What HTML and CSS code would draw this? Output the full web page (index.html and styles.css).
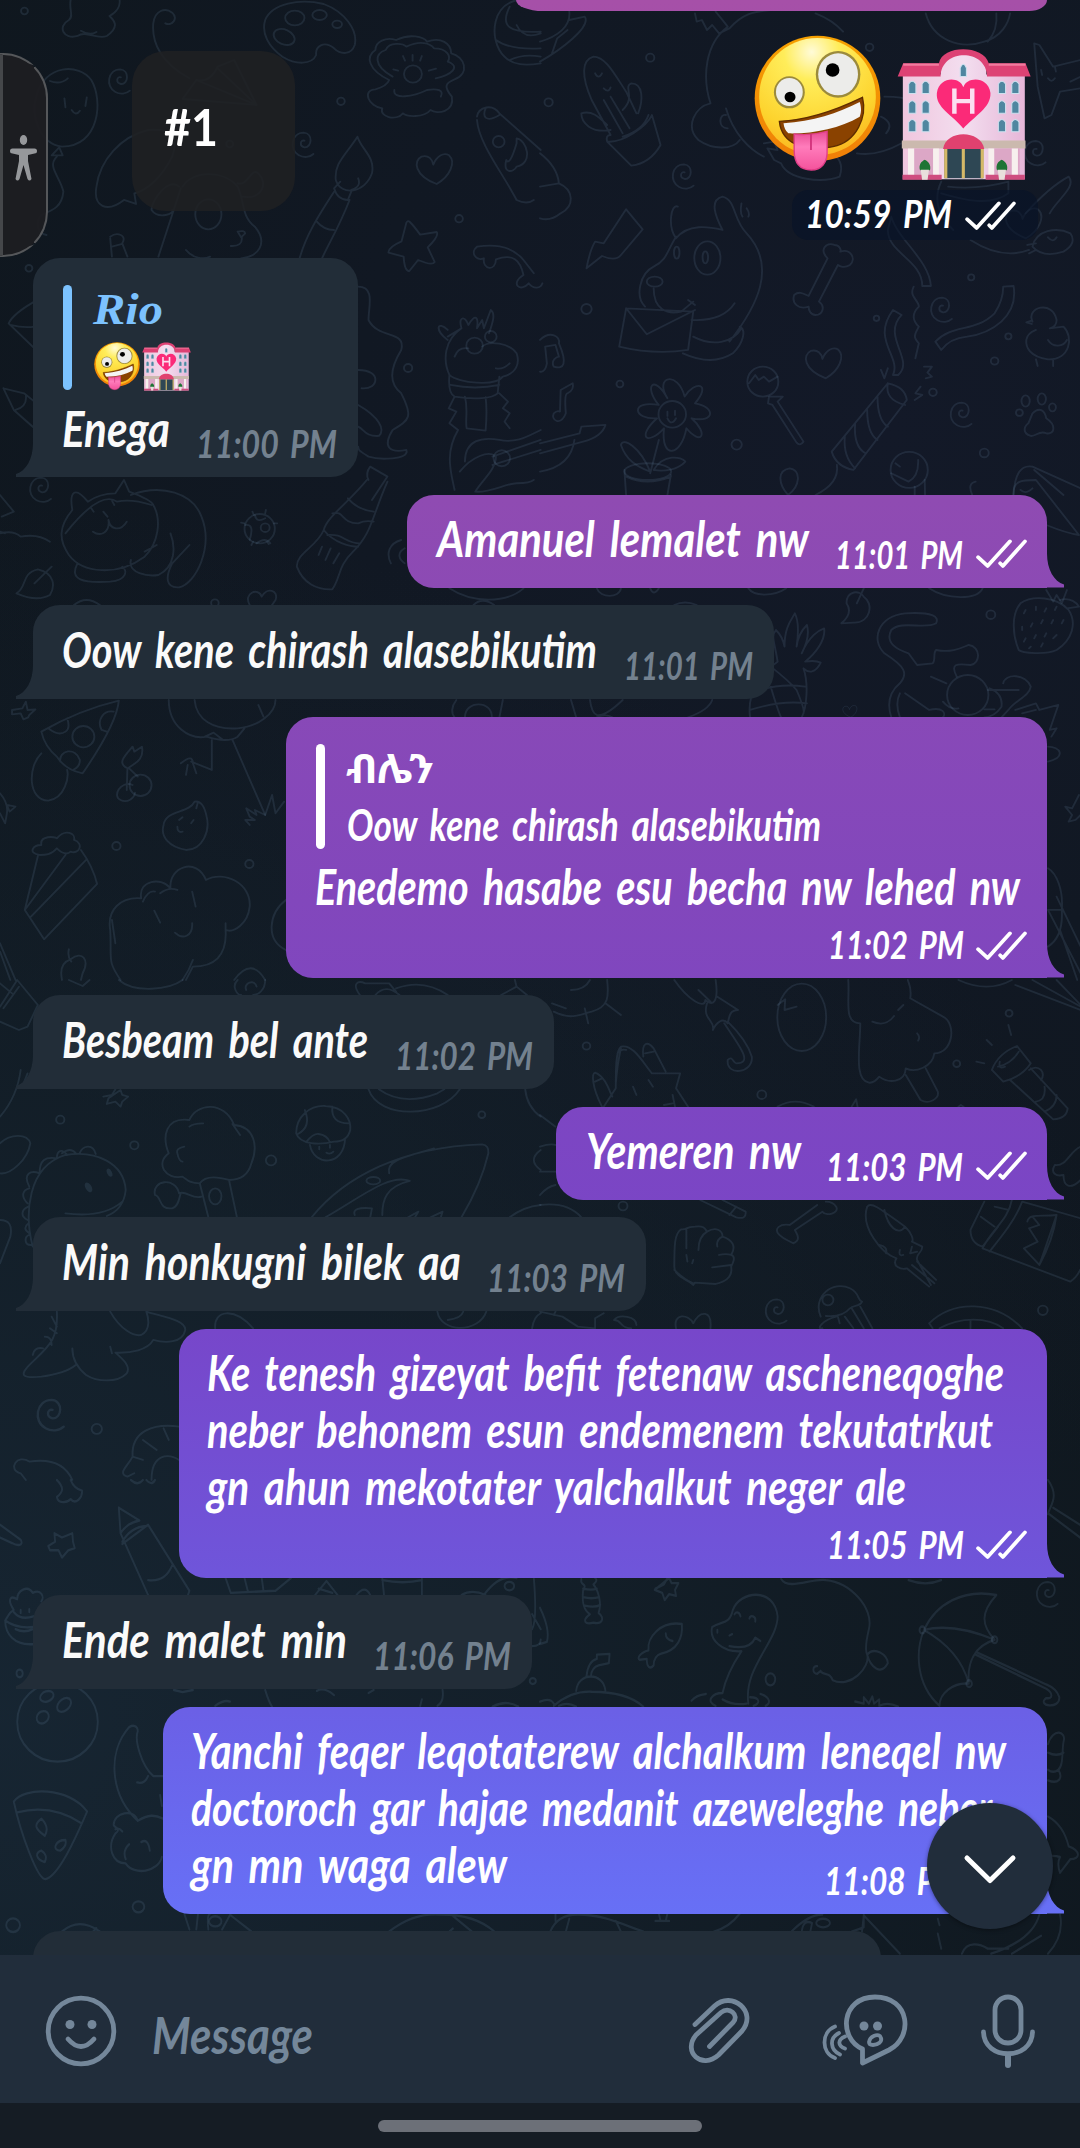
FILE: index.html
```html
<!DOCTYPE html>
<html lang="am">
<head>
<meta charset="utf-8">
<title>Chat</title>
<link rel="stylesheet" href="styles.css">
</head>
<body>
<main class="chat">
  <svg class="wallpaper" width="1080" height="1955" viewBox="0 0 1080 1955" aria-hidden="true">
    <defs>
      <path id="spiral" d="M2-8C-10-12-14 8 2 12C24 14 28-30 0-32C-36-32-44 20-14 36C0 44 18 42 28 32"/>
      <path id="star" d="M-10-72Q2-60 20-34L68-42Q76-30 42 4L62 48Q56 60 14 42L-12 76Q-26 74-28 32L-72 20Q-74 4-34-14L-20-70Q-16-78-10-72Z"/>
      <path id="heart" d="M6 50C-60 24-62-20-38-32C-18-38-6-24-4-8C6-34 26-46 42-36C62-16 46 26 6 50Z"/>
      <path id="bone" d="M4 22L44-60C20-75 15-35 0-50C-5-85 25-100 45-80C70-75 80-50 60-38C45-30 35-38 30-42L-10 55C5 65 0 120-25 125C-45 125-48 110-48 105C-75 115-105 95-100 75C-95 50-65 55-50 65Z"/>
    </defs>
    <g transform="scale(.3444 .3333)">
      <path d="M205 0C200 30 215 50 200 60C165 80 185 120 225 108C250 90 280 120 310 108C350 80 330 60 318 48C350 30 350 5 345-10M235 92Q260 108 280 96M480 70C500 80 518 55 500 38C480 22 450 30 445 70C440 130 470 190 550 235"/>
      <path d="M770 60C790 10 870-5 940 12C1000 35 1040 90 1030 135C1020 165 990 165 970 145C940 120 915 140 918 165C905 195 860 195 820 170C780 140 758 100 770 60Z"/>
      <ellipse cx="856" cy="54" rx="28" ry="22"/><ellipse cx="928" cy="45" rx="21" ry="15"/><ellipse cx="979" cy="73" rx="14" ry="11"/><ellipse cx="825" cy="111" rx="32" ry="22" transform="rotate(25 825 111)"/>
      <path d="M1130 240C1070 210 1060 170 1090 150C1090 125 1120 110 1150 120C1190 100 1230 110 1240 125C1280 110 1310 130 1310 160C1350 170 1365 220 1320 238C1290 250 1290 262 1312 290C1320 335 1270 345 1250 330C1230 355 1180 350 1170 340C1150 365 1100 350 1110 325C1070 320 1050 270 1090 268C1110 262 1125 255 1130 240ZM1140 230C1080 195 1090 160 1120 150C1130 125 1170 130 1180 140C1220 120 1250 130 1260 145C1300 145 1310 170 1300 185C1340 200 1310 225 1265 235M1145 270C1140 300 1200 290 1240 270C1270 265 1290 270 1280 290M1198 165V182M1225 168L1220 182M1170 168L1176 182M1245 212L1266 206M1142 208L1156 212"/>
      <circle cx="1199" cy="222" r="26"/><circle cx="71" cy="33" r="10"/><circle cx="990" cy="304" r="11"/><circle cx="1333" cy="656" r="11"/><circle cx="1185" cy="1104" r="12"/><circle cx="84" cy="805" r="10"/><circle cx="667" cy="432" r="10"/>
      <path d="M1500 0C1430 20 1425 100 1450 150C1480 205 1540 195 1570 190M1480 20C1450 80 1480 100 1570 95M1500 75Q1520 120 1570 100M1440 120Q1480 150 1570 145M1480 180Q1520 160 1570 170"/>
      <path d="M180 440C110 430 90 340 105 290C130 190 230 190 265 240C300 300 290 440 180 440ZM145 243Q175 255 197 235M187 295L190 322M252 292L248 318M208 330Q220 350 232 332M172 442L150 466H182ZM165 470C135 500 175 530 184 575C180 620 155 630 120 645C100 670 110 700 135 705"/>
      <path d="M530 297L570 240Q610 250 632 200L680 180L745 315ZM570 240L745 315L632 205M280 560C290 480 350 410 430 390C500 385 520 410 500 470C470 530 430 570 390 580L395 612L360 600C310 640 270 620 280 560ZM530 560C560 510 650 510 690 560C710 600 700 650 740 680C780 730 750 770 700 775M525 565L460 770M520 560C490 530 440 600 440 630C460 660 510 640 500 630M690 550C720 560 730 500 750 520C780 550 760 600 705 590M540 750C560 775 590 780 610 770M690 695Q710 690 712 700L700 712ZM702 712Q705 740 670 738"/>
      <ellipse cx="605" cy="643" rx="38" ry="45"/>
      <path d="M1038 410C1000 470 970 490 975 540C990 590 1060 580 1080 520C1090 470 1050 450 1038 410ZM988 545L970 565Q980 600 1010 600L1020 575M970 575C930 640 890 700 870 775M1015 600C985 680 960 720 935 775M920 665Q940 690 970 690M1040 535Q1050 560 1020 570"/>
      <path d="M1385 350C1390 320 1430 310 1450 340L1570 450M1385 360C1390 430 1460 520 1500 600Q1530 615 1550 600M1410 325C1400 350 1410 370 1450 345M1500 430Q1480 500 1470 480C1460 520 1490 520 1500 500C1550 490 1530 420 1500 415Z"/><circle cx="1448" cy="425" r="17"/>
      <path d="M1385 740C1420 735 1480 730 1520 780L1550 820M1385 740C1365 755 1380 785 1405 775C1400 810 1440 815 1440 778C1490 760 1510 780 1520 825C1480 850 1510 880 1535 850C1550 870 1570 865 1575 850"/>
      <path d="M1040 860C1090 860 1070 920 1070 960C1100 1020 1180 990 1165 1050C1130 1110 1130 1150 1165 1180C1200 1250 1190 1260 1140 1290C1110 1340 1130 1360 1180 1350C1190 1380 1100 1380 1070 1370C1040 1350 1040 1350 1040 1340M1040 1110C1110 1110 1100 1170 1050 1165M1040 1215C1100 1250 1120 1290 1100 1308C1060 1310 1060 1290 1040 1280M1075 1400L1125 1430L1080 1500M1075 1400Q1060 1420 1070 1440"/>
      <path d="M1300 1010L1340 985C1330 950 1350 945 1360 975C1380 940 1390 950 1385 985L1400 960L1405 985L1425 930C1440 940 1430 970 1420 1000M1340 985C1290 1020 1285 1080 1305 1125C1330 1150 1440 1160 1460 1130C1500 1120 1510 1090 1500 1060C1480 1030 1420 1020 1400 1040M1300 1020C1260 990 1270 960 1300 990M1320 1070Q1330 1040 1360 1045M1440 1105Q1460 1110 1480 1090M1305 1125Q1300 1180 1320 1190C1380 1200 1430 1195 1445 1180L1450 1130M1308 1155Q1380 1170 1450 1155M1350 1190C1360 1230 1350 1260 1355 1285L1410 1292Q1415 1230 1410 1192M1320 1190L1303 1225L1325 1235L1305 1270L1330 1290C1290 1360 1310 1420 1320 1470M1450 1180L1475 1205L1460 1225L1480 1240L1465 1265L1480 1285M1350 1385C1350 1320 1400 1310 1450 1320C1500 1330 1530 1310 1570 1290M1335 1415C1370 1370 1420 1350 1440 1370C1440 1410 1400 1440 1380 1475C1420 1480 1470 1450 1500 1450Q1540 1450 1550 1440M1430 1370L1570 1320M1430 1395L1570 1350"/>
      <circle cx="1378" cy="1037" r="24"/><circle cx="1425" cy="1010" r="17"/><circle cx="1457" cy="1375" r="24"/>
      <path d="M100 905Q40 940 25 970L100 1045M30 975Q70 985 100 980M10 1165L40 1230L100 1285M10 1165L70 1180L100 1205M45 1230Q80 1220 75 1185M320 710C340 695 370 705 355 730L370 770M320 715L325 770M325 740L355 732"/>
      <use href="#spiral" x="349" y="240"/><use href="#spiral" x="882" y="430"/><use href="#spiral" x="120" y="1465"/>
      <use href="#heart" x="1262" y="502"/><use href="#star" x="1200" y="738"/>
    </g>
    <g transform="translate(540) scale(.3444 .3333)">
      <path d="M85 35C90 80 50 110 0 125M85 60L130 50C150 80 60 150 0 185M35 160L50 115L80 90M450 40L455 65L470 60L485 90L500 75L520 100L550 85C590 40 620 35 670 30M510 35Q530 60 545 80C480 130 470 230 495 310C450 320 420 380 460 420C500 450 560 450 580 420M540 325C560 400 610 450 650 470M800 40Q850 60 880 95M1000 290C1080 290 1100 310 1060 320M540 345C520 340 515 385 545 385M650 430L680 425L690 450L660 445L680 480L700 490C720 540 820 550 870 530C880 500 870 480 860 470M920 460Q980 470 1050 430M990 350Q1030 370 1005 400"/>
      <path d="M1120 40C1140 120 1220 150 1290 125C1340 110 1360 70 1365 40M1325 40Q1330 90 1300 125"/>
      <path d="M205 405L150 300C120 230 120 180 155 170C190 170 215 220 250 275L280 340M160 220Q170 240 180 220M185 265Q200 280 205 262M240 330C280 290 240 260 265 250C300 250 300 300 285 340M205 390C150 400 120 370 120 340C150 330 170 350 195 375M185 300L240 400M205 290L260 385M195 425C240 430 310 380 325 345L350 435Q320 490 265 497ZM195 425Q190 405 205 405M240 410Q300 390 315 345"/>
      <path d="M0 460Q50 500 55 550C100 570 100 620 60 640Q30 665 0 655M55 550L0 560"/>
      <path d="M250 628L298 688L235 765Q220 785 180 768L135 805Q145 750 160 725L185 730ZM400 620C380 610 370 680 395 715C430 670 490 680 530 690C510 650 490 600 530 590C570 600 560 660 600 700C690 800 630 920 550 1025M395 710C370 750 370 780 330 800C290 820 275 890 305 920M330 865C330 930 370 945 410 935L445 905M440 960Q530 965 565 910M430 900L450 915M585 610Q580 640 588 650M600 625Q610 640 605 650M250 925L445 935L430 1050Q330 1065 230 1040ZM250 925L310 1003L450 930M415 1060Q500 1100 560 1060C590 1030 600 990 580 980M445 1010C500 1040 560 1030 585 985"/>
      <ellipse cx="397" cy="758" rx="8" ry="18"/><ellipse cx="486" cy="774" rx="38" ry="50"/><ellipse cx="480" cy="772" rx="8" ry="18"/><ellipse cx="333" cy="845" rx="23" ry="15"/>
      <path d="M835 775C810 750 830 725 855 735C870 735 875 750 872 755C900 745 920 775 900 795C885 805 870 800 865 795L810 905C830 920 820 945 800 945C785 945 780 930 780 920C750 930 730 910 738 885C755 870 770 885 780 888Z"/><use href="#heart" x="824" y="1085"/><use href="#heart" x="1405" y="665"/>
      <path d="M1020 650C1040 720 1130 780 1135 858H1110C1110 780 1010 760 1010 690ZM1085 860C1070 890 1100 900 1100 920C1080 940 1080 960 1100 980C1090 1000 1080 1010 1100 1030L1090 1075M1025 930L1050 945C990 1010 1090 1080 1040 1125H1025C1050 1070 960 1020 1025 930ZM1345 860L1375 858C1390 950 1310 1000 1240 1010Q1190 1015 1165 1050L1148 1025C1200 970 1260 1000 1320 940Q1345 900 1345 860ZM990 1110L1000 1135L1010 1105M1115 1100H1138L1125 1118L1138 1130L1120 1135M1105 1160L1090 1180L1110 1185L1088 1200"/>
      <path d="M1010 1150Q1060 1160 1065 1200L910 1410Q860 1400 847 1355ZM1010 1150Q1000 1200 1060 1215M980 1190Q980 1260 1010 1280M950 1230Q950 1300 980 1320M915 1270Q910 1340 945 1360M885 1310Q880 1370 915 1405M862 1395Q870 1450 800 1485"/>
      <path d="M1430 965C1410 920 1490 900 1500 960Q1500 980 1480 985L1520 980C1550 1010 1540 1080 1475 1078C1420 1070 1410 1040 1412 1020Q1415 1000 1440 990M1425 963L1412 967L1428 972M1475 1020C1490 1045 1520 1040 1530 1020M1440 1078L1445 1098M1490 1078V1098"/>
      <circle cx="647" cy="1145" r="45"/><path d="M607 1150L625 1125L635 1140L650 1130L665 1145L690 1130M665 1190L705 1190L690 1205L765 1325Q755 1340 745 1328L675 1215L662 1210Z"/>
      <path d="M370 1195C330 1130 400 1110 420 1190C450 1140 500 1150 450 1210C510 1220 510 1270 440 1255C490 1300 470 1340 425 1285C410 1370 350 1380 360 1285C310 1340 280 1310 340 1255C270 1260 260 1200 345 1215C300 1160 330 1120 370 1195ZM370 1235V1248M392 1232V1245M370 1255Q382 1280 395 1255M345 1320L320 1420M320 1415C290 1340 240 1310 235 1335C250 1380 280 1400 320 1415M330 1410C360 1360 410 1370 422 1385C400 1410 360 1415 330 1410M245 1410L250 1485M380 1425L370 1485M250 1430Q310 1460 380 1430"/><ellipse cx="313" cy="1415" rx="68" ry="25"/><circle cx="384" cy="1243" r="40"/>
      <path d="M0 1020C30 990 60 1010 55 1030C80 1090 70 1110 40 1100C30 1080 50 1070 55 1070L45 1035L15 1040L20 1090C15 1120 0 1115 0 1115M60 1170L95 1150Q100 1170 80 1180Q70 1180 75 1240C60 1280 30 1260 40 1240Q50 1230 58 1235ZM0 1330L115 1300L120 1280L190 1275Q180 1310 125 1325L0 1360M0 1415Q90 1400 100 1320"/>
      <ellipse cx="1410" cy="1203" rx="12" ry="17"/><ellipse cx="1457" cy="1197" rx="12" ry="17"/><ellipse cx="1488" cy="1222" rx="10" ry="12"/><ellipse cx="1392" cy="1238" rx="10" ry="10"/><path d="M1430 1240C1450 1220 1465 1230 1470 1255C1500 1275 1495 1305 1470 1300C1450 1290 1440 1310 1425 1308C1400 1300 1405 1280 1418 1270Z"/>
      <circle cx="1072" cy="1410" r="54"/><path d="M1032 1390L1045 1400M1098 1380Q1100 1430 1070 1445L1020 1420M1088 1460V1485M1117 1440L1118 1485M1375 1485Q1380 1390 1430 1400L1570 1465M1435 1410L1520 1485M1395 1470Q1410 1485 1430 1465M1265 1445Q1240 1450 1255 1485M725 1405C690 1410 690 1450 720 1485C755 1460 760 1410 725 1405Z"/>
      <path d="M1165 545C1140 600 1160 650 1200 690M1185 560Q1270 570 1360 545V580C1310 620 1230 600 1165 580M1410 640Q1480 560 1535 530C1560 560 1500 600 1480 640M1435 130L1450 135L1490 200L1570 180M1435 130L1445 260L1465 355L1485 345L1510 275L1570 265M1455 210L1458 225M1495 200L1498 215M1475 235Q1485 250 1495 235M1540 245L1570 230M1430 740C1440 690 1500 680 1540 700Q1560 730 1520 755Q1460 775 1430 740ZM1415 735L1440 730M1420 760L1440 750M1475 712Q1490 730 1500 712M1250 720Q1340 780 1420 750"/>
      <use href="#spiral" x="418" y="525"/><use href="#spiral" x="1440" y="455"/><use href="#spiral" x="1168" y="925"/><use href="#spiral" x="1225" y="1240"/>
      <circle cx="320" cy="173" r="12"/><circle cx="25" cy="307" r="12"/><circle cx="957" cy="142" r="11"/><circle cx="135" cy="927" r="15"/><circle cx="977" cy="955" r="8"/><circle cx="1252" cy="832" r="9"/><circle cx="1360" cy="1009" r="9"/><circle cx="1320" cy="1083" r="11"/><circle cx="232" cy="1152" r="10"/><circle cx="571" cy="1334" r="15"/><circle cx="1141" cy="1177" r="11"/><circle cx="1290" cy="1359" r="13"/>
    </g>
    <g transform="translate(0 480) scale(.3444 .3333)">
      <path d="M210 90C200 30 220 20 255 65Q290 40 335 40L360 0L375 35Q440 60 445 75C470 120 460 190 420 230C340 290 240 280 200 225C170 180 170 140 210 90ZM190 160Q290 30 340 65Q380 55 440 75M380 45C470 10 560 40 585 110C620 200 570 310 520 322C480 325 480 290 500 250L550 195M225 250C200 300 240 310 320 305C370 300 370 270 355 260M380 240C370 280 430 290 460 285C510 260 510 200 495 160M270 155C290 170 320 160 315 120C320 150 350 155 368 125M300 95L312 110M265 85L272 95M325 62L332 75M420 215L455 195"/>
      <path d="M0 45L40 95L5 110M0 160Q40 150 60 170Q110 160 145 185M0 155L15 160M48 340C80 320 60 280 110 268C160 280 160 320 145 345C110 365 70 350 48 340ZM100 310L150 260M215 375Q250 345 290 375"/>
      <circle cx="754" cy="146" r="44"/><circle cx="770" cy="143" r="13"/><path d="M712 135Q740 130 725 180M740 105Q745 130 770 115M745 190Q770 170 785 190M770 100L772 90M795 130H805M737 105L733 95M710 130L700 128M735 185L730 195M775 183L780 192"/>
      <path d="M1065 0C1010 70 950 110 940 150C920 200 860 220 862 260C880 310 920 330 965 328C990 290 980 260 1025 215C1080 160 1080 110 1125 5M1010 55Q1040 90 1085 95M965 100C1000 90 990 130 1040 130Q1060 120 1085 125M940 150C970 190 1020 200 1040 200M950 165C1000 160 1000 190 1045 190M935 200L925 225M960 205L945 240M985 220L968 250"/>
      <path d="M1165 180C1130 190 1120 220 1135 250M1175 205C1150 220 1160 240 1175 250M725 375C705 340 750 320 760 350C775 320 810 330 800 360L790 375M1305 325C1370 370 1470 370 1520 325M1375 375Q1400 350 1435 375"/>
      <path d="M120 755Q230 690 345 662C340 720 280 820 240 880Q190 870 165 830Q130 800 120 755ZM140 745Q170 770 190 755Q205 745 195 715M330 695C300 690 280 720 295 750L310 755M175 845C170 810 220 800 232 840Q232 860 215 868M120 820C80 860 80 960 140 962C190 955 200 890 195 870"/><circle cx="242" cy="770" r="32"/>
      <path d="M490 660C490 740 550 780 600 770Q660 790 690 770L710 745M565 660C570 720 620 750 690 745C750 740 800 700 800 660M595 770L620 758L645 778M750 675L765 710M615 780V870L555 845M675 780L770 1005M525 850Q560 820 560 850L570 880M540 885L545 855M35 690L65 685L75 665L80 690L103 688L85 705L82 712L68 718L60 700L35 703Z"/>
      <circle cx="408" cy="916" r="32"/><path d="M385 915C350 900 325 950 350 960C370 970 390 955 392 938M368 930L370 865C340 850 360 830 385 800L390 815L412 800C420 840 390 850 372 865M375 865L400 890"/>
      <path d="M475 1035C480 990 550 1000 565 965Q590 960 600 1010C610 1050 590 1110 540 1110C490 1100 465 1070 475 1035ZM570 985L575 965M520 1020L530 1012M555 1030L562 1020M515 1040Q515 1060 530 1055M0 940Q25 970 20 1000L15 1030L0 1000M20 975L45 980L28 995Z"/>
      <path d="M115 1125C80 1120 95 1095 120 1095C115 1065 160 1070 165 1075C190 1045 220 1060 215 1080C245 1090 230 1125 205 1115C190 1130 170 1110 165 1105C150 1125 130 1125 115 1125ZM110 1128L72 1290L128 1378L282 1212Q270 1160 235 1110M72 1290L190 1125M90 1310L250 1140M770 1005L740 990L745 1005L715 985L725 1010L740 1020L712 1020L725 1035M770 1005L790 945L800 1000L825 965"/>
      <path d="M410 1255C400 1200 470 1190 495 1225C490 1160 570 1130 598 1200C650 1170 730 1210 725 1280C720 1330 680 1360 655 1350C660 1430 620 1460 560 1460L540 1500M410 1255C350 1250 310 1290 320 1350C325 1440 310 1440 350 1500M415 1265Q430 1230 450 1235M465 1240Q490 1220 515 1230M655 1330V1355M325 1320L335 1390M560 1440Q550 1470 530 1500M448 1292L465 1328M558 1235L568 1280M508 1358C530 1380 560 1370 558 1330M830 1260C780 1300 770 1380 830 1410M180 1500Q170 1450 205 1438C240 1410 260 1440 240 1480L235 1500M200 1408Q195 1430 207 1445M0 1390L45 1500M0 1415L30 1500M680 1500Q730 1430 770 1500"/>
      <circle cx="338" cy="1098" r="12"/><circle cx="724" cy="1152" r="12"/><circle cx="624" cy="369" r="11"/>
      <path d="M1325 660C1310 680 1310 700 1320 712M1460 660L1450 712M1350 712C1350 660 1430 660 1428 712"/>
    </g>
    <g transform="translate(540 480) scale(.3444 .3333)">
      <path d="M1375 50C1370 0 1400 0 1440 0L1565 165Q1530 160 1470 135M1130 325C1180 360 1270 360 1285 325M165 325C175 355 230 355 235 325M605 325C620 350 680 350 715 325M875 430Q910 400 890 370C890 330 930 330 940 350C970 370 960 430 910 428ZM940 325L920 370M320 325Q330 350 345 325M1470 330L1490 365L1500 345L1515 370L1530 330"/>
      <path d="M1395 370C1430 345 1500 350 1535 390C1560 430 1545 480 1500 510C1470 525 1400 520 1390 510C1370 460 1370 400 1395 370ZM1510 360C1540 350 1560 370 1565 380L1530 385M1410 390L1405 400M1440 380V390M1470 385L1465 395M1500 380L1495 390M1400 440V450M1430 430L1425 440M1460 420L1455 430M1490 420L1485 430M1520 420L1515 430M1410 475L1405 485M1440 465L1435 475M1470 460L1465 470M1500 465L1490 475M1425 500L1420 505M1460 490L1455 500"/>
      <path d="M690 545C680 480 670 470 685 450Q705 470 710 500C710 440 730 420 740 400Q755 430 745 500C750 460 770 440 775 435Q785 470 760 520C780 470 810 450 825 445C830 480 800 520 770 545Q800 540 815 548C800 580 780 580 765 565C780 610 775 680 760 712M690 545C640 580 600 640 610 712M670 560Q720 600 745 630Q770 690 765 700M640 630Q700 610 770 620M610 690Q700 660 775 670M670 620Q690 690 700 712"/>
      <path d="M1150 430C1160 410 1140 395 1060 400C980 410 960 480 1000 520C1060 560 1070 580 1045 610C1010 640 1010 680 1020 712M1150 430C1120 450 1050 420 1020 450C1000 490 1040 510 1070 520L1095 555L1140 550C1150 540 1140 520 1150 510C1200 520 1230 500 1245 495C1280 500 1280 550 1250 555C1210 550 1190 550 1210 590M1135 590L1180 610M1060 640L1130 690C1170 680 1180 700 1170 712M1045 640Q1030 670 1045 712M1170 665Q1190 690 1215 685M1300 630H1390M1345 610C1350 580 1410 580 1425 620C1420 650 1380 660 1360 690L1340 712M1305 625Q1345 640 1340 680Q1320 710 1290 712M1380 690L1440 670L1450 690L1505 675L1480 750L1500 745L1485 770M1475 800C1510 800 1530 830 1475 845M1400 700L1440 690M1290 688H1320"/>
      <circle cx="1242" cy="645" r="60"/><use href="#heart" transform="translate(900 692) scale(.4)"/>
      <path d="M90 660L105 712M145 660Q150 700 165 705Q190 710 240 660M165 712Q190 700 210 712M500 660Q490 690 430 712M1565 945L1545 985L1525 980L1545 1005L1535 1025L1555 1020L1570 1005M1475 1165C1500 1180 1520 1230 1515 1290L1475 1290M1475 1290L1570 1480M1500 1250L1570 1400M1510 1350L1560 1500M1475 1400Q1520 1370 1515 1290M390 375Q420 360 455 375"/>
      <circle cx="1309" cy="404" r="13"/>
    </g>
    <g transform="translate(0 980) scale(.3444 .3333)">
      <path d="M0 80L50 0L110 75L80 140L55 150L0 125M10 85L55 20M0 10L35 40M200 0L240 18L260 0M345 0C390 40 490 30 530 0M690 0C670 20 690 45 700 45M770 0C770 30 750 45 735 45M715 30C705 10 740-5 745 20M1045 45C1020 10 1040 0 1060 10H1130L1150 35M1150 25Q1230-5 1300 45M1090 45Q1120 10 1160 45M1455 45L1500 20L1495 0M1500 20L1530 45M0 410Q50 350 60 270M80 280L65 320"/>
      <path d="M300 350L325 345L335 328M350 330L355 345L372 350L355 365L350 380L335 365L310 372L315 355ZM1070 328C1100 420 1280 415 1335 328M1100 328Q1170 380 1270 340L1290 328M1525 328Q1530 380 1570 410"/>
      <path d="M605 712L580 610C550 610 545 600 530 590C480 600 450 550 490 520C470 470 480 410 550 420C570 370 650 360 680 435C740 440 750 500 730 550C720 590 690 600 665 600L688 712M580 610Q600 580 665 600M550 440Q560 430 590 430M515 520Q510 505 535 500M675 432L697 465M515 520Q520 545 530 545M585 650C560 660 540 630 520 640C510 590 440 600 450 645C470 650 460 690 500 685C520 680 520 650 525 640"/><ellipse cx="625" cy="649" rx="18" ry="24"/>
      <path d="M860 460C860 410 900 375 945 378C1000 380 1020 420 1017 450C1010 480 990 485 970 485C930 495 870 495 860 460ZM965 380Q960 430 1012 430M885 390Q905 440 865 462M890 485Q910 460 925 462Q950 465 958 487M900 495C910 560 1000 560 1002 475M927 500V508M958 495V503M948 518Q958 525 968 515"/>
      <path d="M905 712C1000 590 1170 500 1400 493Q1420 495 1418 520C1400 600 1370 660 1340 712M945 712C1050 650 1130 580 1190 603C1120 620 1110 660 1110 705M1130 580C1120 540 1180 530 1260 505M1030 705Q1020 680 1080 685L1075 712M1185 712L1215 695L1205 712M1250 712L1285 695L1280 712"/><ellipse cx="1084" cy="602" rx="20" ry="11"/>
      <path d="M95 800C70 700 80 560 190 525C280 510 360 550 365 630C360 680 330 700 310 708M190 700Q300 715 355 665M230 522C240 495 270 490 278 522M180 520Q205 500 220 520M165 535C165 510 180 505 195 525M115 580C115 540 130 530 165 535M85 620C65 580 90 570 115 580M80 670C60 650 65 630 85 625M80 720C60 710 60 690 82 680M85 760C70 750 70 740 83 730M90 795C70 795 70 770 85 765M0 490C30 460 80 460 88 490C80 540 30 585 0 580M0 720Q40 720 30 770L0 850"/>
      <g class="solid"><ellipse cx="257" cy="622" rx="9" ry="16" transform="rotate(-30 257 622)"/><ellipse cx="318" cy="578" rx="7" ry="13" transform="rotate(-25 318 578)"/></g>
      <path d="M320 995C350 1050 390 1070 410 1065C440 1050 430 1010 425 995C470 1010 540 1020 538 1050C530 1090 480 1090 445 1080C430 1110 380 1120 335 1118C360 1140 380 1160 368 1180C340 1210 280 1205 250 1185C220 1160 210 1130 210 1105M320 1100L325 1120M165 995C170 1080 140 1100 90 1150C50 1190 70 1195 120 1190Q190 1180 220 1155M150 1010L165 1040M145 1045L165 1060M130 1070Q150 1070 150 1095M95 1125Q100 1100 125 1105M625 1045C620 990 680 980 735 1045M1270 995C1280 1060 1390 1060 1412 995M1300 1020Q1340 1015 1345 995M1480 712Q1520 680 1570 675M1570 510Q1530 540 1570 570M1545 1045Q1550 1010 1570 1000"/>
      <use href="#spiral" transform="translate(150 1300) scale(1.25)"/>
      <path d="M520 1340C450 1330 380 1350 385 1430C370 1460 340 1480 370 1490L390 1480M440 1500C440 1420 490 1420 520 1440M475 1345L490 1380M415 1380L455 1410M385 1430L415 1440M85 1445C50 1420 20 1470 60 1480L75 1500M85 1445Q180 1430 210 1500"/>
      <circle cx="175" cy="419" r="12"/><circle cx="390" cy="496" r="12"/><circle cx="787" cy="541" r="15"/><circle cx="1399" cy="404" r="10"/><circle cx="281" cy="1347" r="15"/>
    </g>
    <g transform="translate(540 980) scale(.3444 .3333)">
      <path d="M40 95C90 120 110 105 150 95C200 80 200 50 195 0M130 85L140 130M190 70L235 105M90 30Q130 30 145 0M35 70L75 85M390 0C430 60 480 90 480 60C500 80 520 70 510 0M460 30L495 65M485 70C470 120 510 120 502 150M515 50L575 90C550 90 550 110 545 130C530 110 510 130 502 150M535 130C580 200 620 250 570 250C560 250 560 225 545 240C540 290 620 280 615 230C600 180 560 140 545 125"/>
      <ellipse cx="760" cy="112" rx="71" ry="101"/><path d="M690 75L712 58L710 90L745 80M895 0C900 60 880 130 930 130C930 200 910 300 955 308Q970 310 985 290C1010 310 1060 310 1062 265C1090 280 1140 260 1145 220C1200 220 1210 130 1170 110L1075 55C1080 20 1070 10 1068 0M965 125C1000 140 1020 120 1028 108M1040 90L1055 75M1095 160Q1105 170 1098 182M1062 285L1105 360C1130 375 1160 355 1155 335L1120 265"/>
      <path d="M1385 198L1425 250Q1400 290 1345 305L1312 270Q1330 220 1385 198ZM1330 260Q1370 250 1390 215M1335 245Q1330 270 1350 260M1365 300L1490 418Q1530 415 1532 385L1425 265M1420 270C1450 250 1470 280 1455 300M1465 320Q1470 360 1440 365M1500 345Q1500 380 1465 395M1360 135L1368 165M1297 180L1312 195M1267 245L1290 250M1215 0Q1300 40 1370 0M1380 15L1570 90M1430 0L1570 80M1500 0L1570 75"/>
      <path d="M180 380C150 320 150 280 160 278C190 290 200 330 210 350M185 380L220 325C220 270 220 210 235 200C270 190 300 250 325 280H407L395 325L430 380M220 310Q225 250 235 205M225 220Q235 205 250 210M300 230C295 190 310 180 330 205L365 275M305 220L330 215M270 320L280 345M315 300L328 320M385 345L392 380M160 305L180 295M360 375L385 370M0 405L45 440M0 500Q30 490 45 495M0 575H45M45 615Q20 620 0 645M0 675Q80 665 120 712"/>
      <path d="M465 660L570 712Q600 720 597 695L530 660M570 680L550 705M805 675L725 735C700 730 675 745 695 765C710 780 720 780 735 790C760 780 745 760 740 750L820 695C830 710 870 700 860 680Q850 665 830 665M690 380Q740 350 795 380M905 380L918 358L922 380M1215 380L1222 375L1230 380"/>
      <path d="M445 915C430 900 390 890 390 860C390 800 390 760 410 748C430 750 420 740 450 740C480 735 480 750 485 755C510 740 530 750 530 770C560 780 570 800 555 825C570 830 560 850 555 860C560 890 540 905 510 912L450 908ZM425 750L425 805M485 755Q460 770 460 810M530 770Q510 780 515 800M520 825Q540 820 555 825M500 862L555 855M425 825L428 845M445 840L442 850M390 870Q420 900 445 910"/>
      <path d="M950 680C960 665 980 680 1060 740C1080 760 1085 780 1080 785L1110 800C1110 820 1090 820 1095 840L1135 915M1060 740C1040 770 1010 740 1000 690M950 680C930 740 990 820 1035 835C1020 860 1050 870 1065 865L1130 920M985 795Q1010 800 1005 820M1045 810Q1040 830 1055 825M1080 800L1075 820L1095 815M1095 845L1150 900M1080 855L1145 910"/>
      <path d="M1290 665L1250 750Q1250 790 1285 800L1330 740M1285 805L1540 905Q1560 890 1568 870M1285 805C1310 750 1360 720 1370 660M1305 815C1340 770 1380 720 1400 665L1570 715M1280 710L1320 740M1320 680L1360 690M1415 725C1420 700 1450 710 1500 705L1450 855L1405 805L1445 785L1420 745L1450 735L1430 710M1500 705Q1490 780 1450 855M1570 500C1540 510 1530 560 1495 555C1480 580 1500 590 1520 585C1520 620 1540 630 1570 600"/>
      <path d="M860 1010C820 1020 800 1050 820 1045M815 1010C790 950 850 900 900 925C930 940 920 960 935 965C930 980 910 975 900 985C880 1010 850 1010 830 1008M885 1010L910 1045M905 985L940 1045M930 980L965 1045M865 1010L870 1030M0 995L65 1010L110 1040L160 1045V1015L185 1000M40 1005L45 995M215 1020C230 1000 280 1010 280 1035M215 1020C240 1020 230 1045 265 1045M395 1045C385 1000 430 1000 445 1030C465 990 500 990 495 1045M1130 1030C1200 960 1320 960 1400 1045M1160 1045C1220 1010 1300 1010 1345 1045M1130 1030L1140 1045M1250 1022V1045"/><circle cx="836" cy="960" r="16"/>
      <use href="#spiral" x="688" y="990"/>
      <circle cx="135" cy="198" r="11"/><circle cx="644" cy="344" r="13"/><circle cx="1362" cy="100" r="10"/><circle cx="1210" cy="251" r="10"/><circle cx="241" cy="678" r="13"/><circle cx="1460" cy="991" r="14"/>
    </g>
    <g transform="translate(0 1480) scale(.3444 .426)">
      <path d="M165 0C190 20 180 30 165 40C170 60 200 50 205 45C220 60 240 40 238 25Q215 20 205 0M380 0Q400 15 415 0M425 0Q440 15 450 0M0 105L60 140C70 155 50 155 35 148L0 135M345 65L350 125L430 270M345 65L405 95Q370 100 350 125M355 150L430 105L550 260L545 272M355 145Q380 110 425 108M430 235Q480 240 500 200M140 155L160 145L158 125L180 135L210 125L212 145L217 160L198 165L180 182L170 165L145 165Z"/>
      <path d="M100 385C40 390 15 360 15 330C30 310 30 310 40 305C20 280 30 270 50 280C50 260 80 245 95 265C120 255 130 275 120 285M15 330Q50 350 97 345M45 350Q70 360 95 350M60 305V312M85 303V310M40 310Q60 330 97 320M655 230L670 265L800 260L845 230M720 262L710 230M760 230L765 260M915 270L948 237L980 270M925 255L965 265M1035 270Q1060 245 1075 270M1110 230L1115 270M1225 230V270M1110 235Q1170 245 1225 235M1405 270Q1450 220 1500 230M1340 270Q1370 255 1410 270M1550 230Q1560 330 1545 350M1545 315L1570 350M1545 390Q1570 390 1570 375"/>
      <ellipse cx="167" cy="568" rx="117" ry="93"/><ellipse cx="136" cy="508" rx="20" ry="12" transform="rotate(-15 136 508)"/><ellipse cx="186" cy="528" rx="22" ry="14" transform="rotate(-30 186 528)"/><ellipse cx="124" cy="557" rx="18" ry="14" transform="rotate(-20 124 557)"/>
      <path d="M473 695H445C410 670 390 610 400 590C400 575 385 575 375 580C310 640 320 740 400 800C430 785 450 785 473 795M398 710Q420 715 430 695M400 800C390 770 330 780 330 810C340 820 350 820 335 830C310 860 325 900 365 900C390 930 460 920 470 885M335 820Q345 815 355 825M375 855Q355 870 365 890M465 740L470 765M410 850Q430 840 435 870"/>
      <path d="M40 755C70 720 200 720 253 778C220 840 170 930 132 937C110 940 60 830 40 755ZM50 780Q150 760 235 805M120 795C95 810 105 820 130 835Q145 815 120 795ZM190 845C160 845 150 870 175 870Q195 860 190 845ZM120 870C100 875 105 890 130 897Q140 880 120 870ZM180 1060Q230 1025 290 1060M270 1060L280 1052M535 1018L550 1055M575 1018L570 1055M605 1055Q600 1020 610 1018M645 1055L670 1018M670 1022L730 1060M1130 1060Q1200 1015 1280 1020Q1380 1020 1435 1060M1310 1020L1370 1060M1305 1060L1315 1053M770 493Q780 520 790 532M920 495Q940 485 970 505M1220 530L1225 515M1285 493Q1290 520 1270 530M1430 532Q1470 515 1505 532M625 530Q650 515 668 520M505 493L530 498L560 493M1070 500L1085 493"/><ellipse cx="625" cy="1036" rx="18" ry="12"/>
      <circle cx="57" cy="454" r="9"/><ellipse cx="402" cy="1002" rx="17" ry="13"/><ellipse cx="38" cy="1045" rx="20" ry="16"/><ellipse cx="1547" cy="472" rx="9" ry="7"/><ellipse cx="1479" cy="249" rx="14" ry="10"/>
    </g>
    <g transform="translate(540 1480) scale(.3444 .426)">
      <path d="M120 232C115 250 140 240 125 260C120 300 135 310 145 315C120 330 130 340 155 335C180 340 190 325 170 312C180 290 170 260 155 245Q170 235 160 230M125 255Q150 260 165 255M125 275Q150 280 172 275M130 295Q160 300 175 293M335 255L360 245L370 230M375 230L382 242H402L392 258L395 272L375 268L362 282L355 265L333 258Z"/>
      <path d="M412 338C350 330 310 370 315 400C290 405 280 420 290 422L310 420C310 440 320 445 330 435C330 420 340 410 350 408C400 400 415 370 412 338ZM365 360Q365 375 385 378M0 300Q30 350 20 380L0 385M0 520Q30 510 40 525M40 530Q90 495 150 497C220 497 270 510 300 532M105 495C110 450 185 450 190 495M135 460Q140 425 165 420L165 410L202 408L200 430L170 435Q150 440 148 460M55 530Q80 520 105 532"/>
      <path d="M530 500C540 460 570 420 585 402C530 405 490 375 500 345C530 330 550 340 560 305C580 260 680 250 690 320C690 380 590 440 605 525M550 390Q610 400 625 370L640 378M565 315C570 308 580 310 582 320M608 325C610 315 628 320 625 332M550 365L558 362M515 352V358M530 500C500 500 480 520 510 530M610 510C640 510 640 525 620 530M600 525Q560 530 530 515M440 518C460 500 480 505 482 502M640 502C670 510 670 525 655 530"/>
      <path d="M700 232C720 260 790 230 830 235C900 240 970 300 955 350C940 400 950 410 950 410C960 440 900 490 850 470C840 450 830 460 815 450M950 410C970 390 1010 410 1010 430C990 460 960 440 950 410M805 437C790 435 790 455 805 455L815 448M1070 235Q1120 250 1165 235M1475 0C1510 40 1480 60 1475 80M1490 65L1568 105M1478 80L1568 135M915 520L940 525V510L955 525L965 508L970 525L985 515V530Q1010 520 1040 532"/>
      <path d="M1115 352C1150 290 1230 255 1325 270C1280 310 1280 340 1320 375C1260 390 1240 430 1245 478C1200 475 1160 500 1160 530C1090 480 1090 400 1115 352ZM1115 352Q1200 335 1320 375M1115 352Q1220 400 1245 478M1265 410L1470 490C1490 500 1490 515 1470 512C1440 530 1510 540 1508 510Q1500 490 1470 480L1270 405"/>
      <circle cx="1110" cy="352" r="8"/><circle cx="1320" cy="375" r="8"/><circle cx="1246" cy="478" r="8"/><circle cx="669" cy="468" r="14"/>
      <use href="#spiral" transform="translate(1475 265) scale(1 .8)"/>
      <path d="M1475 620C1490 580 1530 590 1520 615C1515 640 1520 670 1505 680C1520 700 1505 715 1475 705M1475 640Q1500 650 1520 640M1475 680Q1490 690 1505 680M1475 790Q1520 810 1535 860C1570 870 1570 890 1540 890L1510 922Q1500 900 1510 885C1490 880 1480 885 1475 880M30 1060Q50 1020 110 1020C180 1020 230 1040 300 1060M75 1060L85 1030M220 1035L235 1060M45 1018V1035M335 1035H375M345 1018L350 1035H365L370 1018M505 1060Q550 1050 580 1018M730 1060Q780 1020 820 1020M935 1060L940 1022L1045 1112M940 1018V1050L905 1060M1155 1030L1160 1045M1155 1065L1165 1100M1225 1112C1240 1080 1280 1090 1300 1100L1360 1100M1310 1112Q1430 1080 1450 1020M1370 1112L1455 1070M1510 1020C1520 1060 1500 1090 1475 1112M760 1060Q765 1030 790 1040L785 1060"/><ellipse cx="822" cy="1040" rx="20" ry="10"/>
    </g>
  </svg>

  <section class="thread">
    <div class="bubble out first"></div>

    <div class="sticker">
      <svg class="face" width="127" height="140" viewBox="620 102 370 420" preserveAspectRatio="none">
        <defs>
          <radialGradient id="skin" cx=".45" cy=".12" r=".95"><stop offset="0" stop-color="#fffbd8"/><stop offset=".25" stop-color="#ffed5a"/><stop offset=".7" stop-color="#fdd32d"/><stop offset="1" stop-color="#f9ae1d"/></radialGradient>
          <linearGradient id="rim" x2="0" y2="1"><stop offset="0" stop-color="#f6a000"/><stop offset="1" stop-color="#ef7f08"/></linearGradient>
          <linearGradient id="tongue" x2="0" y2="1"><stop offset="0" stop-color="#e84b93"/><stop offset=".4" stop-color="#ff7cbb"/><stop offset="1" stop-color="#f4539c"/></linearGradient>
          <g id="zany">
            <ellipse cx="805" cy="295" rx="183" ry="188" fill="url(#rim)"/>
            <ellipse cx="805" cy="290" rx="170" ry="176" fill="url(#skin)"/>
            <ellipse cx="723" cy="277" rx="45" ry="48" fill="#9b8a3c"/><ellipse cx="723" cy="276" rx="39" ry="42" fill="#ececea"/><circle cx="725" cy="291" r="16"/>
            <ellipse cx="865" cy="223" rx="65" ry="70" fill="#9b8a3c"/><ellipse cx="865" cy="223" rx="58" ry="63" fill="#ececea"/><ellipse cx="849" cy="210" rx="20" ry="20"/>
            <path d="M694 364C780 360 860 330 936 292C950 350 920 425 850 440C770 460 700 430 694 364Z" fill="#8a4200" stroke="#5e2c00" stroke-width="4"/>
            <path d="M706 370C790 364 865 340 928 306C934 325 932 340 928 350C870 385 790 402 720 400Q708 390 706 370Z" fill="#f4f4f4"/>
            <path d="M737 402Q785 408 833 394V450C835 490 815 510 787 510C755 510 737 490 737 450Z" fill="url(#tongue)" stroke="#e03e88" stroke-width="4"/>
            <path d="M786 402V450" stroke="#cf2f78" stroke-width="5"/>
          </g>
        </defs>
        <use href="#zany"/>
      </svg>
      <svg class="hospital" width="134" height="133" viewBox="1038 140 390 400" preserveAspectRatio="none">
        <defs>
          <linearGradient id="wall"><stop offset="0" stop-color="#f0c6de"/><stop offset=".5" stop-color="#f3deef"/><stop offset="1" stop-color="#e6b6d8"/></linearGradient>
          <g id="clinic">
            <path d="M1055 220H1165V190C1180 140 1280 140 1298 190V220H1410V535H1055Z" fill="url(#wall)"/>
            <path d="M1040 226L1056 186H1160C1170 130 1290 130 1305 186H1412L1427 226H1300C1300 140 1165 140 1165 226Z" fill="#dd4274"/>
            <path d="M1056 190H1160M1305 190H1412" stroke="#f27b9e" stroke-width="7"/>
            <g fill="#4f86a0" stroke="#cde0ee" stroke-width="3"><path d="M1222 226V200Q1231 178 1240 200V226ZM1072 277V248Q1082 232 1093 248V277ZM1111 277V248Q1121 232 1132 248V277ZM1333 277V248Q1343 232 1354 248V277ZM1372 277V248Q1382 232 1393 248V277ZM1072 336V307Q1082 291 1093 307V336ZM1111 336V307Q1121 291 1132 307V336ZM1333 336V307Q1343 291 1354 307V336ZM1372 336V307Q1382 291 1393 307V336ZM1072 392V363Q1082 347 1093 363V392ZM1111 392V363Q1121 347 1132 363V392ZM1333 392V363Q1343 347 1354 363V392ZM1372 392V363Q1382 347 1393 363V392Z"/></g>
            <path d="M1231 382C1200 340 1150 320 1154 275C1162 225 1220 225 1231 258C1242 225 1303 225 1310 275C1312 320 1262 345 1231 382Z" fill="#fb2a78"/>
            <path d="M1205 262V338M1257 262V338M1205 300H1257" fill="none" stroke="#fbdff0" stroke-width="13"/>
            <path d="M1052 418H1412V442H1052Z" fill="#cbb9ae"/>
            <path d="M1070 442H1145V525H1070ZM1318 442H1395V525H1318Z" fill="#dca7c6"/>
            <path d="M1070 442H1088V522H1070ZM1143 442H1160V522H1143ZM1304 442H1321V522H1304ZM1372 442H1390V522H1372Z" fill="#f7f0ee"/>
            <path d="M1176 444H1289V532H1176Z" fill="#2e4754"/>
            <path d="M1180 444V532M1231 444V532M1286 444V532" stroke="#d5b968" stroke-width="9"/>
            <path d="M1172 444C1180 385 1282 385 1292 444Z" fill="#e0416f"/>
            <path d="M1054 521H1168V536H1054ZM1296 521H1410V536H1296Z" fill="#cf4d7f"/>
            <path d="M1105 508C1100 490 1110 480 1119 476C1130 482 1138 492 1134 508ZM1329 508C1324 490 1334 480 1343 476C1354 482 1362 492 1358 508Z" fill="#1e7434"/>
            <path d="M1107 506H1131L1127 536H1111ZM1331 506H1355L1351 536H1335Z" fill="#e9dfdc"/>
          </g>
        </defs>
        <use href="#clinic"/>
      </svg>
    </div>
    <div class="stamp">
      <svg class="time" width="147" height="50"><text y="38" textLength="147" lengthAdjust="spacingAndGlyphs">10:59 PM</text></svg>
      <svg class="ticks" width="51" height="29" viewBox="1264 180 150 86" preserveAspectRatio="none"><path d="M1270 234L1298 260L1364 187M1335 252L1343 260L1408 187"/></svg>
    </div>

    <div class="bubble in reply">
      <div class="quote">
        <svg class="rio" width="71" height="47"><text x="0" y="39" textLength="70" lengthAdjust="spacingAndGlyphs">Rio</text></svg>
        <div class="minis">
          <svg width="46" height="48" viewBox="620 105 370 408" preserveAspectRatio="none"><use href="#zany"/></svg>
          <svg width="49" height="49" viewBox="1038 140 390 400" preserveAspectRatio="none"><use href="#clinic"/></svg>
        </div>
      </div>
      <div class="row">
        <svg class="line" width="108" height="80"><text y="50" textLength="108" lengthAdjust="spacingAndGlyphs">Enega</text></svg>
        <svg class="time" width="141" height="80"><text y="61" textLength="141" lengthAdjust="spacingAndGlyphs">11:00 PM</text></svg>
      </div>
    </div>

    <div class="bubble out"><div class="row">
      <svg class="line" width="372" height="93"><text y="62" textLength="372" lengthAdjust="spacingAndGlyphs">Amanuel lemalet nw</text></svg>
      <svg class="time" width="128" height="93"><text y="74" textLength="128" lengthAdjust="spacingAndGlyphs">11:01 PM</text></svg>
      <svg class="ticks" width="51" height="29" viewBox="1264 180 150 86" preserveAspectRatio="none"><path d="M1270 234L1298 260L1364 187M1335 252L1343 260L1408 187"/></svg>
    </div></div>

    <div class="bubble in"><div class="row">
      <svg class="line" width="535" height="94"><text y="63" textLength="535" lengthAdjust="spacingAndGlyphs">Oow kene chirash alasebikutim</text></svg>
      <svg class="time" width="129" height="94"><text y="75" textLength="129" lengthAdjust="spacingAndGlyphs">11:01 PM</text></svg>
    </div></div>

    <div class="bubble out replied">
      <div class="quote">
        <svg class="name" width="88" height="48"><text y="39" textLength="88" lengthAdjust="spacingAndGlyphs">ብሌን</text></svg>
        <svg class="excerpt" width="475" height="57"><text x="1" y="49" textLength="474" lengthAdjust="spacingAndGlyphs">Oow kene chirash alasebikutim</text></svg>
      </div>
      <svg class="line" width="705" height="57"><text y="49" textLength="705" lengthAdjust="spacingAndGlyphs">Enedemo hasabe esu becha nw lehed nw</text></svg>
      <div class="meta">
        <svg class="time" width="136" height="65"><text y="46" textLength="136" lengthAdjust="spacingAndGlyphs">11:02 PM</text></svg>
        <svg class="ticks" width="51" height="29" viewBox="1264 180 150 86" preserveAspectRatio="none"><path d="M1270 234L1298 260L1364 187M1335 252L1343 260L1408 187"/></svg>
      </div>
    </div>

    <div class="bubble in"><div class="row">
      <svg class="line" width="306" height="94"><text y="63" textLength="306" lengthAdjust="spacingAndGlyphs">Besbeam bel ante</text></svg>
      <svg class="time" width="138" height="94"><text y="75" textLength="138" lengthAdjust="spacingAndGlyphs">11:02 PM</text></svg>
    </div></div>

    <div class="bubble out"><div class="row">
      <svg class="line" width="214" height="93"><text y="62" textLength="215" lengthAdjust="spacingAndGlyphs">Yemeren nw</text></svg>
      <svg class="time" width="137" height="93"><text y="74" textLength="137" lengthAdjust="spacingAndGlyphs">11:03 PM</text></svg>
      <svg class="ticks" width="51" height="29" viewBox="1264 180 150 86" preserveAspectRatio="none"><path d="M1270 234L1298 260L1364 187M1335 252L1343 260L1408 187"/></svg>
    </div></div>

    <div class="bubble in"><div class="row">
      <svg class="line" width="398" height="94"><text y="63" textLength="399" lengthAdjust="spacingAndGlyphs">Min honkugni bilek aa</text></svg>
      <svg class="time" width="138" height="94"><text y="75" textLength="138" lengthAdjust="spacingAndGlyphs">11:03 PM</text></svg>
    </div></div>

    <div class="bubble out long">
      <svg class="line" width="797" height="57"><text y="50" textLength="797" lengthAdjust="spacingAndGlyphs">Ke tenesh gizeyat befit fetenaw ascheneqoghe</text></svg>
      <svg class="line" width="786" height="57"><text y="50" textLength="786" lengthAdjust="spacingAndGlyphs">neber behonem esun endemenem tekutatrkut</text></svg>
      <svg class="line" width="699" height="57"><text y="50" textLength="699" lengthAdjust="spacingAndGlyphs">gn ahun mekotater yalchalkut neger ale</text></svg>
      <div class="meta">
        <svg class="time" width="137" height="66"><text y="47" textLength="137" lengthAdjust="spacingAndGlyphs">11:05 PM</text></svg>
        <svg class="ticks" width="51" height="29" viewBox="1264 180 150 86" preserveAspectRatio="none"><path d="M1270 234L1298 260L1364 187M1335 252L1343 260L1408 187"/></svg>
      </div>
    </div>

    <div class="bubble in"><div class="row">
      <svg class="line" width="284" height="94"><text y="63" textLength="285" lengthAdjust="spacingAndGlyphs">Ende malet min</text></svg>
      <svg class="time" width="138" height="94"><text y="75" textLength="138" lengthAdjust="spacingAndGlyphs">11:06 PM</text></svg>
    </div></div>

    <div class="bubble out long last">
      <svg class="line" width="815" height="57"><text y="50" textLength="815" lengthAdjust="spacingAndGlyphs">Yanchi feqer leqotaterew alchalkum leneqel nw</text></svg>
      <svg class="line" width="801" height="57"><text y="50" textLength="801" lengthAdjust="spacingAndGlyphs">doctoroch gar hajae medanit azeweleghe neber</text></svg>
      <div class="row">
        <svg class="line" width="316" height="81"><text y="50" textLength="316" lengthAdjust="spacingAndGlyphs">gn mn waga alew</text></svg>
        <svg class="time" width="139" height="81"><text y="62" textLength="139" lengthAdjust="spacingAndGlyphs">11:08 PM</text></svg>
        <svg class="ticks" width="51" height="29" viewBox="1264 180 150 86" preserveAspectRatio="none"><path d="M1270 234L1298 260L1364 187M1335 252L1343 260L1408 187"/></svg>
      </div>
    </div>

    <div class="bubble in next"></div>
  </section>

  <div class="counter"><svg width="54" height="50"><text y="42" textLength="54" lengthAdjust="spacingAndGlyphs">#1</text></svg></div>
  <div class="handle">
    <svg width="27" height="46" viewBox="0 0 27 46"><ellipse cx="13.5" cy="5" rx="3.7" ry="5"/><path d="M2.5 13.5H24.5A2.5 2.5 0 0 1 24.5 18.5L18 20V26L21.500 44Q19.500 47 17.500 44L13.500 30L9.500 44Q7.500 47 5.500 44L9 26V20L2.500 18.500A2.500 2.500 0 0 1 2.500 13.500Z"/></svg>
  </div>
  <button class="scroll-down" aria-label="Scroll down"><svg width="54" height="32" viewBox="963 1854 54 32"><path d="M967 1858L990 1880.500L1013 1858"/></svg></button>
</main>

<footer class="composer">
  <svg class="smile" width="74" height="74" viewBox="44 1994 74 74"><circle cx="81" cy="2031" r="32.800"/><path d="M68 2039Q81 2054 94 2039"/><circle class="dot" cx="70" cy="2024.500" r="4.500"/><circle class="dot" cx="92" cy="2024.500" r="4.500"/></svg>
  <svg class="hint" width="162" height="80"><text y="59" textLength="161" lengthAdjust="spacingAndGlyphs">Message</text></svg>
  <svg class="clip" width="70" height="74" viewBox="685 1994 70 74"><path d="M695 2024.500L714.500 2006C732 1990 758 2012 742 2031L718.500 2055C702 2070 682 2052 696 2035L721 2012.500C729 2006 740 2015 733 2022.500L709.500 2046.500"/></svg>
  <svg class="voice" width="90" height="80" viewBox="819 1991 90 80"><path d="M862.500 2049C838 2038 841 1997 875 1997C910 1997 914 2037 889 2050L862.500 2063Z"/><path class="wave" d="M835 2026.500C821 2032 821 2053 835 2058M839 2033C829 2038 830 2050 840 2054.500M845 2036.500C837 2040 838 2046 845 2048.500"/><circle class="dot" cx="864" cy="2026" r="4.500"/><circle class="dot" cx="877.500" cy="2026" r="4.500"/><path class="wave" d="M869 2042C870 2036 877 2034 880 2036C884 2042 877 2045 873 2045Q869 2045 869 2042Z"/></svg>
  <svg class="mic" width="60" height="80" viewBox="978 1991 60 80"><rect x="995" y="1997" width="26" height="46" rx="13"/><path d="M983.500 2032C984 2061 1032 2061 1032.500 2032"/><path class="stem" d="M1008 2056V2065"/></svg>
</footer>
<nav class="gesture"><span></span></nav>
</body>
</html>
```
FILE: styles.css
```css
* { box-sizing: border-box; }
body {
  margin: 0;
  width: 1080px;
  height: 2148px;
  overflow: hidden;
  background: #151c24;
  font-family: Lato, "Noto Sans", sans-serif;
}
svg { display: block; flex: none; overflow: visible; }
text { font-variant-ligatures: none; }

.chat {
  position: relative;
  height: 1955px;
  overflow: hidden;
  background:
    radial-gradient(circle at 0 88%, rgba(23, 38, 51, .95), transparent 60%),
    radial-gradient(circle at 82% 22%, #131928, rgba(19, 25, 40, 0) 60%),
    #0f171e;
}
.wallpaper {
  position: absolute;
  inset: 0;
  fill: none;
  stroke: rgba(110, 145, 175, .16);
  stroke-width: 5.5;
  stroke-linejoin: round;
  stroke-linecap: round;
}
.wallpaper .solid { fill: rgba(110, 145, 175, .16); stroke: none; }

.thread {
  position: relative;
  display: flex;
  flex-direction: column;
  align-items: flex-start;
  padding: 0 33px;
}

.bubble {
  position: relative;
  flex: none;
  margin-bottom: 17.500px;
  border-radius: 27px;
}
.bubble::after {
  content: "";
  position: absolute;
  bottom: 0;
  width: 17px;
  height: 34px;
  background: inherit;
}
.in { padding: 0 21px 0 29px; background: #222d38; border-bottom-left-radius: 0; }
.in::after { left: -17px; clip-path: path("M17 0C17 16 10 28 0 31V34H17Z"); }
.out {
  align-self: flex-end;
  padding: 0 20px 0 30px;
  border-bottom-right-radius: 0;
  background: linear-gradient(#a650a8 0, #8f4bb2 500px, #8247bc 900px, #7845c8 1300px, #6f55da 1570px, #6b60e6 1710px, #6770f6 1915px) fixed;
}
.out::after { right: -17px; clip-path: path("M0 0C0 16 7 28 17 31V34H0Z"); }

.row { display: flex; gap: 27px; }
.row .ticks { margin: 0 0 20px -15px; align-self: flex-end; }
.out .row { gap: 26px; }
.out .row .ticks { margin-left: -13px; }

.line text { font: italic 700 50px Lato, sans-serif; word-spacing: 7px; fill: #fafafa; }
.out .line text { fill: #fff; }
.time text { font: italic 700 38px Lato, sans-serif; word-spacing: 5px; fill: #73818f; }
.out .time text, .stamp .time text { fill: #fff; }
.ticks { fill: none; stroke: #fff; stroke-width: 11; stroke-linecap: round; stroke-linejoin: round; }

.first { width: 531px; height: 11px; margin: 0; border-radius: 0 0 18px 27px / 0 0 11px 11px; }
.first::after, .next::after { display: none; }

.sticker {
  align-self: flex-end;
  display: flex;
  gap: 16px;
  height: 179px;
  padding-right: 16px;
}
.face { margin-top: 23px; }
.hospital { margin-top: 37px; }

.stamp {
  align-self: flex-end;
  display: flex;
  align-items: center;
  gap: 13px;
  width: 246px;
  height: 50px;
  margin: 0 9px 18px 0;
  padding-left: 13px;
  border-radius: 16px;
  background: rgba(7, 19, 40, .6);
}

.reply { width: 325px; height: 219px; padding-top: 27px; }
.quote { position: relative; height: 105px; padding-left: 31px; }
.quote::before {
  content: "";
  position: absolute;
  left: 1px;
  top: 0;
  width: 9px;
  height: 105px;
  border-radius: 5px;
  background: #7cc2fe;
}
.out .quote::before { background: #fff; }
.reply .row { padding-top: 7px; gap: 26px; }
.rio text { font: italic 700 44px "Liberation Serif", serif; fill: #7cc2fe; }
.minis { display: flex; gap: 2px; padding: 10px 0 0 1px; }

.replied { width: 761px; height: 261px; padding-top: 27px; padding-left: 29px; }
.name text { font: 700 40px Lato, "Noto Sans Ethiopic", sans-serif; fill: #fff; }
.excerpt text { font: italic 700 43px Lato, sans-serif; word-spacing: 6px; fill: #fff; }
.replied .line { margin-top: 7px; }
.meta { display: flex; justify-content: flex-end; gap: 12px; }
.meta .ticks { margin-top: 18px; }

.long { padding: 12px 20px 0 28px; width: 868px; height: 249px; }
.last { width: 884px; height: 207px; }
.last .row { justify-content: flex-end; }
.last .row .line { margin-right: auto; }
.last .row .ticks { margin-bottom: 19px; }

.next { width: 848px; height: 60px; border-radius: 27px; }

.counter {
  position: absolute;
  left: 132px;
  top: 51px;
  width: 163px;
  height: 160px;
  padding: 53px 0 0 32px;
  border-radius: 34px;
  background: rgba(32, 33, 35, .86);
}
.counter text { font: 700 52px Lato, sans-serif; fill: #fff; }

.handle {
  position: absolute;
  left: -3px;
  top: 53px;
  width: 51px;
  height: 204px;
  padding: 80px 0 0 10px;
  border: 2.500px solid #55575a;
  border-left: 6px solid #45474a;
  border-radius: 0 45px 45px 0;
  background: rgba(29, 30, 34, .95);
}
.handle svg { margin-left: -3px; fill: #96989b; }

.scroll-down {
  position: absolute;
  left: 927px;
  top: 1803px;
  display: grid;
  place-items: center;
  width: 126px;
  height: 126px;
  padding: 8px 0 0;
  border: 0;
  border-radius: 50%;
  background: #212d3b;
  box-shadow: 0 1px 4px rgba(0, 0, 0, .4);
}
.scroll-down svg { fill: none; stroke: #fff; stroke-width: 5; stroke-linecap: round; stroke-linejoin: round; }

.composer {
  display: flex;
  height: 148px;
  padding: 0 42px 0 44px;
  background: #212d3b;
}
.composer svg { margin-top: 39px; fill: none; stroke: #74879a; stroke-width: 4.800; stroke-linecap: round; stroke-linejoin: round; }
.composer .dot { fill: #74879a; stroke: none; }
.composer .wave { stroke-width: 3.800; }
.composer .stem { stroke-width: 6; }
.composer .hint { margin: 40px auto 0 34px; }
.composer .hint text { font: italic 700 52px Lato, sans-serif; fill: #74879a; stroke: none; }
.composer .voice { margin: 36px 69px 0 64px; }
.composer .mic { margin-top: 36px; }

.gesture { display: flex; justify-content: center; height: 45px; padding-top: 17px; background: #151c24; }
.gesture span { width: 324px; height: 12px; border-radius: 6px; background: #6c7078; }
```
